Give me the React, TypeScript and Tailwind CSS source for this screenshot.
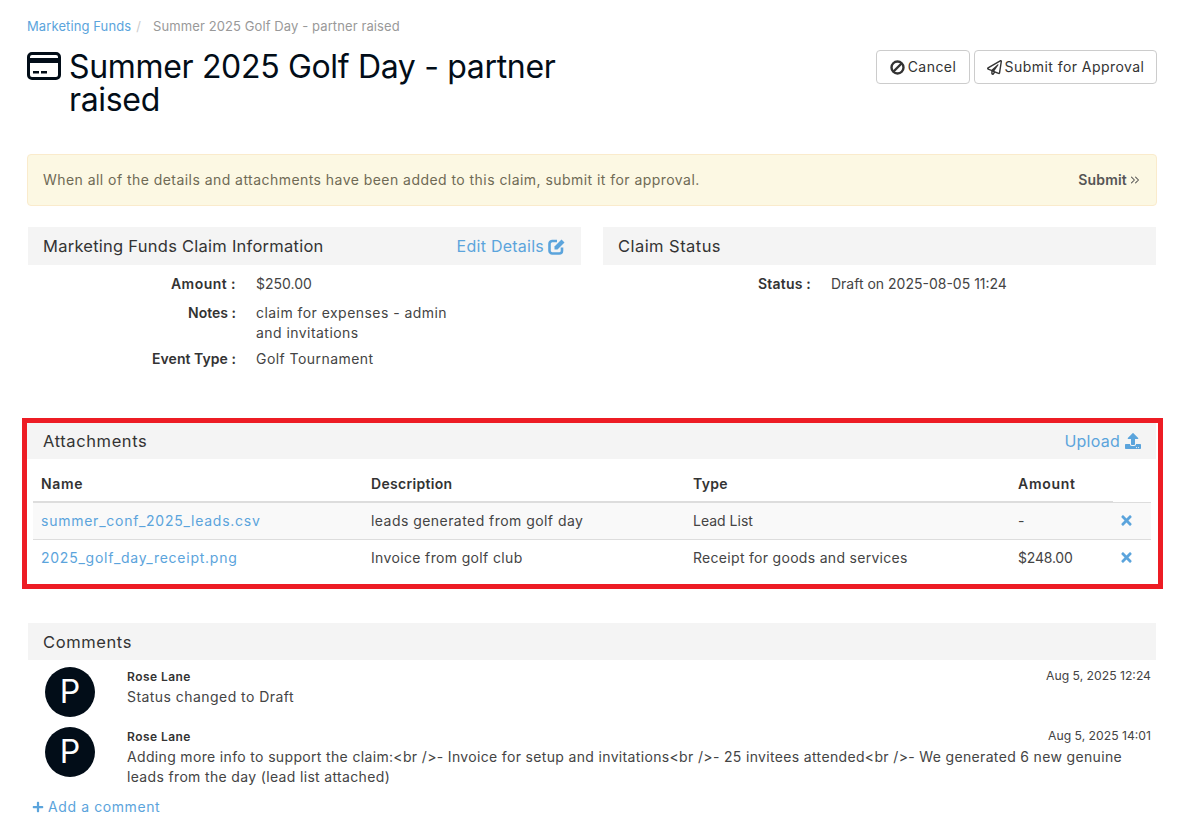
import React from "react";
import { FaRegPaperPlane, FaUpload, FaTimes, FaPlus } from "react-icons/fa";
import { ChevronsRight } from "lucide-react";

const CardIcon = () => (
  <svg width="34" height="28" viewBox="0 0 34 28" className="shrink-0 mt-[2px]">
    <rect x="1.5" y="1.5" width="31" height="25" rx="3.5" fill="none" stroke="#020d18" strokeWidth="3" />
    <rect x="2" y="6" width="30" height="5" fill="#020d18" />
    <rect x="6" y="19" width="6" height="2.5" fill="#020d18" />
    <rect x="14" y="19" width="6" height="2.5" fill="#020d18" />
  </svg>
);

const BanIcon = () => (
  <svg width="15" height="15" viewBox="0 0 15 15" className="shrink-0">
    <circle cx="7.5" cy="7.5" r="6" fill="none" stroke="currentColor" strokeWidth="2.4" />
    <path d="M3.5 11.5 11.5 3.5" stroke="currentColor" strokeWidth="2.4" />
  </svg>
);

const EditIcon = () => (
  <svg width="18" height="17" viewBox="0 0 18 17" className="shrink-0">
    <path d="M9 3H4.5A2.8 2.8 0 0 0 1.5 5.8v6.7a2.8 2.8 0 0 0 3 3h6.7a2.8 2.8 0 0 0 2.8-2.8V9.5" fill="none" stroke="currentColor" strokeWidth="2.6" />
    <path d="M6.5 8.5 13.5 1.5 16.5 4.5 9.5 11.5H6.5Z" fill="currentColor" />
  </svg>
);

const Header = ({ title, action, className = "h-[38px]", titleClass = "" }: { title: string; action?: React.ReactNode; className?: string; titleClass?: string }) => (
  <div className={`flex items-center justify-between bg-[#f4f4f4] px-[15px] text-[16.5px] tracking-[0.25px] text-[#333] ${className}`}>
    <span className={titleClass}>{title}</span>
    {action}
  </div>
);

const Row = ({ label, labelClass, children, className = "" }: { label: string; labelClass: string; children: React.ReactNode; className?: string }) => (
  <div className={`flex ${className}`}>
    <div className={`w-[208px] shrink-0 text-right font-semibold text-[#333] ${labelClass}`}>{label} :</div>
    <div className="ml-[20px] w-[200px]">{children}</div>
  </div>
);

const Comment = ({ date, children }: { date: string; children: React.ReactNode }) => (
  <div className="flex">
    <div className="ml-[17px] flex h-[50px] w-[50px] shrink-0 items-center justify-center rounded-full bg-[#020d18] text-[32px] tracking-normal text-white">P</div>
    <div className="ml-[32px] min-w-0 flex-1 pr-[5px]">
      <div className="flex items-start justify-between">
        <span className="text-[12px] font-semibold leading-[20px] text-[#333]">Rose Lane</span>
        <span className="text-[12.2px] leading-[18px] tracking-normal text-[#444]">{date}</span>
      </div>
      <div className="text-[14px] leading-[20px] text-[#444]">{children}</div>
    </div>
  </div>
);

export default function App() {
  return (
    <div className="min-h-[831px] bg-white pl-[27px] pr-[20px] pt-[18px] text-[14px] leading-[20px] tracking-[0.45px] text-[#444] [font-family:Inter,sans-serif]">
      <div className="flex h-[16px] items-center text-[13px] tracking-[0.1px] text-[#999]">
        <a className="text-[#5ba4dc]">Marketing Funds</a>
        <span className="ml-[5px] mr-[12px] text-[#ccc]">/</span>
        <span>Summer 2025 Golf Day - partner raised</span>
      </div>

      <div className="mt-[16px] flex items-start justify-between">
        <div className="flex w-[560px] gap-[8px]">
          <CardIcon />
          <h1 className="text-[32px] font-normal leading-[33px] tracking-[-0.33px] text-[#020d18]">Summer 2025 Golf Day - partner raised</h1>
        </div>
        <div className="flex gap-[4px]">
          <button className="flex h-[34px] w-[94px] items-center justify-center gap-[3px] rounded-[4px] border border-[#ccc] bg-white text-[#333]">
            <BanIcon /> Cancel
          </button>
          <button className="flex h-[34px] w-[183px] items-center justify-center gap-[3px] rounded-[4px] border border-[#ccc] bg-white text-[#333]">
            <FaRegPaperPlane size={15} /> Submit for Approval
          </button>
        </div>
      </div>

      <div className="mt-[38px] flex h-[52px] items-center justify-between rounded-[4px] border border-[#faebcc] bg-[#fcf8e3] pl-[15px] pr-[14px] text-[#6f6a55]">
        <span>When all of the details and attachments have been added to this claim, submit it for approval.</span>
        <span className="flex items-center font-semibold tracking-[0.2px] text-[#555]">Submit <ChevronsRight size={14} strokeWidth={1.75} className="ml-[1px]" /></span>
      </div>

      <div className="mx-[1px] mt-[21px] grid grid-cols-[553px_553px] gap-[22px]">
        <div>
          <Header
            title="Marketing Funds Claim Information"
            action={
              <a className="flex items-center gap-[4px] text-[16px] text-[#5ba4dc]">
                Edit Details <EditIcon />
              </a>
            }
          />
          <div className="mt-[9px] flex flex-col">
            <Row label="Amount" labelClass="tracking-[0.45px]" className="mb-[9px]"><span className="tracking-normal">$250.00</span></Row>
            <Row label="Notes" labelClass="tracking-normal" className="mb-[6px]">claim for expenses - admin and invitations</Row>
            <Row label="Event Type" labelClass="tracking-[0.05px]">Golf Tournament</Row>
          </div>
        </div>
        <div>
          <Header title="Claim Status" titleClass="tracking-[0.45px]" />
          <div className="mt-[9px] flex">
            <div className="w-[208px] shrink-0 text-right font-semibold tracking-[0.2px] text-[#333]">Status :</div>
            <div className="ml-[20px] tracking-normal">Draft on 2025-08-05 11:24</div>
          </div>
        </div>
      </div>

      <div className="-ml-[5px] -mr-[6px] mt-[49px] h-[171px] border-[5px] border-[#ed1c24]">
        <Header
          title="Attachments"
          titleClass="tracking-[0.6px]"
          className="mr-[2px] h-[36px] pb-[1px] pl-[16px]"
          action={
            <a className="flex items-center gap-[5px] text-[16px] text-[#5ba4dc]">
              Upload <FaUpload size={16} />
            </a>
          }
        />
        <table className="ml-[6px] w-[1118px] table-fixed border-collapse">
          <colgroup>
            <col className="w-[330px]" />
            <col className="w-[322px]" />
            <col className="w-[325px]" />
            <col className="w-[103px]" />
            <col className="w-[38px]" />
          </colgroup>
          <thead>
            <tr className="h-[43px] text-left tracking-[0.3px] text-[#333]">
              <th className="border-b-2 border-[#ddd] px-[8px] pt-[7px] font-semibold tracking-[0.7px]">Name</th>
              <th className="border-b-2 border-[#ddd] px-[8px] pt-[7px] font-semibold">Description</th>
              <th className="border-b-2 border-[#ddd] px-[8px] pt-[7px] font-semibold">Type</th>
              <th className="border-b-2 border-[#ddd] px-[8px] pt-[7px] font-semibold tracking-[0.7px]">Amount</th>
              <th className="border-b border-[#ddd]"></th>
            </tr>
          </thead>
          <tbody>
            <tr className="h-[37px] border-b border-[#ddd] bg-[#f9f9f9]">
              <td className="px-[8px] tracking-[0.75px] text-[#5ba4dc]">summer_conf_2025_leads.csv</td>
              <td className="px-[8px]">leads generated from golf day</td>
              <td className="px-[8px] tracking-normal">Lead List</td>
              <td className="px-[8px]">-</td>
              <td className="px-[8px] text-[#5ba4dc]"><FaTimes size={15} className="-ml-[2px]" /></td>
            </tr>
            <tr className="h-[37px]">
              <td className="px-[8px] tracking-[0.75px] text-[#5ba4dc]">2025_golf_day_receipt.png</td>
              <td className="px-[8px] tracking-[0.35px]">Invoice from golf club</td>
              <td className="px-[8px] tracking-[0.3px]">Receipt for goods and services</td>
              <td className="px-[8px] tracking-[-0.2px]">$248.00</td>
              <td className="px-[8px] text-[#5ba4dc]"><FaTimes size={15} className="-ml-[2px]" /></td>
            </tr>
          </tbody>
        </table>
      </div>

      <div className="mx-[1px] mt-[34px]">
        <Header title="Comments" titleClass="tracking-[0.6px]" className="h-[37px]" />
        <div className="mt-[7px] flex flex-col gap-[10px]">
          <Comment date="Aug 5, 2025 12:24">Status changed to Draft</Comment>
          <Comment date="Aug 5, 2025 14:01"><span className="tracking-[0.34px]">Adding more info to support the claim:&lt;br /&gt;- Invoice for setup and invitations&lt;br /&gt;- 25 invitees attended&lt;br /&gt;- We generated 6 new genuine leads from the day (lead list attached)</span></Comment>
        </div>
      </div>
      <a className="ml-[5px] mt-[10px] flex items-center gap-[4px] tracking-[0.6px] text-[#5ba4dc]"><FaPlus size={12} /> Add a comment</a>
    </div>
  );
}
